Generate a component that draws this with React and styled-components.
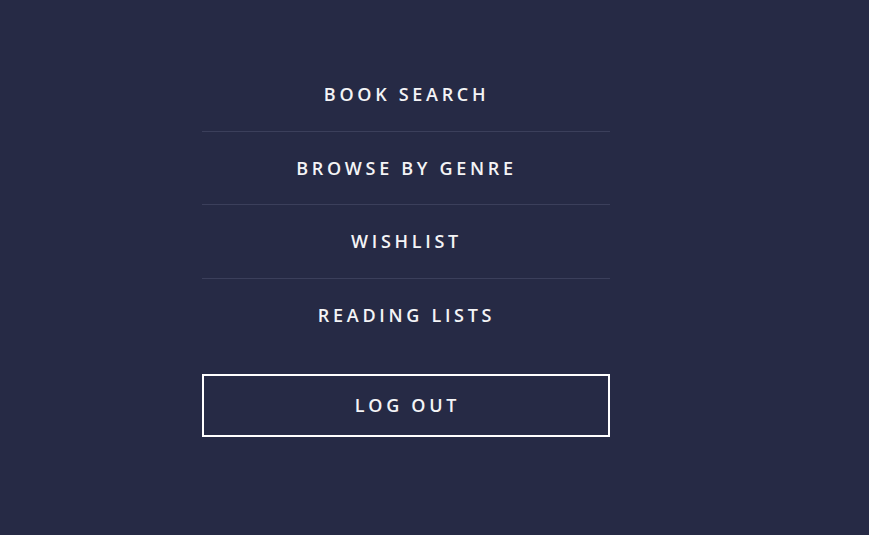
import React from 'react';
import styled, { createGlobalStyle } from 'styled-components';

const GlobalStyle = createGlobalStyle`
  html, body {
    margin: 0;
    padding: 0;
    background: #262a45;
  }
  body {
    font-family: "Open Sans", "Liberation Sans", sans-serif;
  }
`;

const Page = styled.div`
  width: 869px;
  height: 535px;
  box-sizing: border-box;
  padding: 58px 0 0 202px;
  background: #262a45;
`;

const Menu = styled.nav`
  width: 408px;
  display: flex;
  flex-direction: column;
`;

const MenuItem = styled.a`
  box-sizing: border-box;
  height: 73.5px;
  display: flex;
  align-items: center;
  justify-content: center;
  border-bottom: ${props => props.last ? 'none' : '1px solid #3b3f5b'};
  color: #f4f4f6;
  font-size: 18px;
  font-weight: 600;
  letter-spacing: 3.7px;
  text-decoration: none;
  padding: 0 0 0 1px;
  cursor: pointer;
`;

const LogoutButton = styled.button`
  box-sizing: border-box;
  margin-top: 22px;
  height: 63px;
  width: 408px;
  background: transparent;
  border: 2px solid #ffffff;
  color: #f4f4f6;
  font-family: inherit;
  font-size: 18px;
  font-weight: 600;
  letter-spacing: 3.7px;
  padding: 0 0 1px 3px;
  cursor: pointer;
`;

const items = ['BOOK SEARCH', 'BROWSE BY GENRE', 'WISHLIST', 'READING LISTS'];

export default function App() {
  return (
    <>
      <GlobalStyle />
      <Page>
        <Menu>
          {items.map((label, i) => (
            <MenuItem key={label} last={i === items.length - 1}>{label}</MenuItem>
          ))}
          <LogoutButton>LOG OUT</LogoutButton>
        </Menu>
      </Page>
    </>
  );
}
